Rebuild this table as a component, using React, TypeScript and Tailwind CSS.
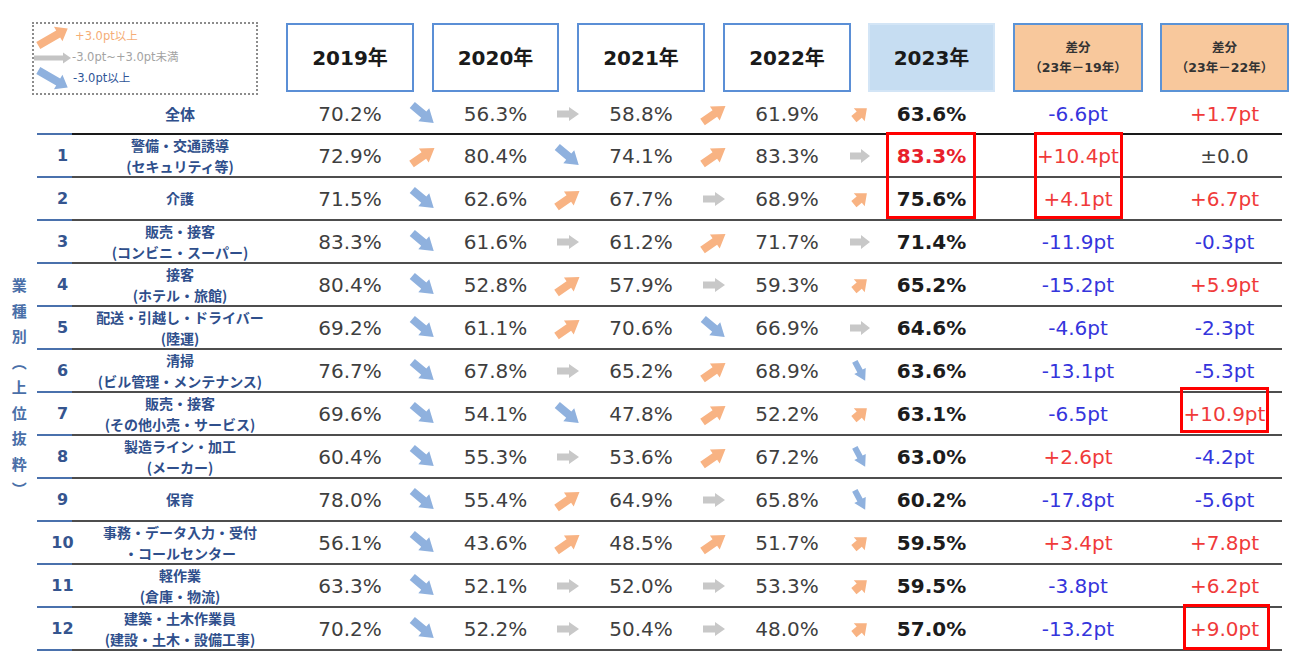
import React from 'react';

type Dir = 'u' | 'r' | 'd';

interface RowData {
  rank?: number;
  label: string[];
  values: string[];
  arrows: Dir[];
  diff1: string;
  diff2: string;
  hot?: boolean;
}

const HEAD_GRID =
  'grid grid-cols-[286px_128px_18px_127px_18px_128px_18px_128px_17px_127px_18px_130px_17px_129px]';
const ROW_GRID =
  'grid grid-cols-[51px_198px_128px_18px_127px_18px_128px_18px_128px_17px_127px_18px_130px_17px_129px]';

const NUM = "[font-family:'DejaVu_Sans','Noto_Sans_CJK_JP',sans-serif]";
const CJK = "[font-family:'Noto_Sans_CJK_JP',sans-serif]";

const total: RowData = {
  label: ['全体'],
  values: ['70.2%', '56.3%', '58.8%', '61.9%', '63.6%'],
  arrows: ['d', 'r', 'u', 'u'],
  diff1: '-6.6pt',
  diff2: '+1.7pt',
};

const rows: RowData[] = [
  { rank: 1, label: ['警備・交通誘導', '(セキュリティ等)'], values: ['72.9%', '80.4%', '74.1%', '83.3%', '83.3%'], arrows: ['u', 'd', 'u', 'r'], diff1: '+10.4pt', diff2: '±0.0', hot: true },
  { rank: 2, label: ['介護'], values: ['71.5%', '62.6%', '67.7%', '68.9%', '75.6%'], arrows: ['d', 'u', 'r', 'u'], diff1: '+4.1pt', diff2: '+6.7pt' },
  { rank: 3, label: ['販売・接客', '(コンビニ・スーパー)'], values: ['83.3%', '61.6%', '61.2%', '71.7%', '71.4%'], arrows: ['d', 'r', 'u', 'r'], diff1: '-11.9pt', diff2: '-0.3pt' },
  { rank: 4, label: ['接客', '(ホテル・旅館)'], values: ['80.4%', '52.8%', '57.9%', '59.3%', '65.2%'], arrows: ['d', 'u', 'r', 'u'], diff1: '-15.2pt', diff2: '+5.9pt' },
  { rank: 5, label: ['配送・引越し・ドライバー', '(陸運)'], values: ['69.2%', '61.1%', '70.6%', '66.9%', '64.6%'], arrows: ['d', 'u', 'd', 'r'], diff1: '-4.6pt', diff2: '-2.3pt' },
  { rank: 6, label: ['清掃', '(ビル管理・メンテナンス)'], values: ['76.7%', '67.8%', '65.2%', '68.9%', '63.6%'], arrows: ['d', 'r', 'u', 'd'], diff1: '-13.1pt', diff2: '-5.3pt' },
  { rank: 7, label: ['販売・接客', '(その他小売・サービス)'], values: ['69.6%', '54.1%', '47.8%', '52.2%', '63.1%'], arrows: ['d', 'd', 'u', 'u'], diff1: '-6.5pt', diff2: '+10.9pt' },
  { rank: 8, label: ['製造ライン・加工', '(メーカー)'], values: ['60.4%', '55.3%', '53.6%', '67.2%', '63.0%'], arrows: ['d', 'r', 'u', 'd'], diff1: '+2.6pt', diff2: '-4.2pt' },
  { rank: 9, label: ['保育'], values: ['78.0%', '55.4%', '64.9%', '65.8%', '60.2%'], arrows: ['d', 'u', 'r', 'd'], diff1: '-17.8pt', diff2: '-5.6pt' },
  { rank: 10, label: ['事務・データ入力・受付', '・コールセンター'], values: ['56.1%', '43.6%', '48.5%', '51.7%', '59.5%'], arrows: ['d', 'u', 'u', 'u'], diff1: '+3.4pt', diff2: '+7.8pt' },
  { rank: 11, label: ['軽作業', '(倉庫・物流)'], values: ['63.3%', '52.1%', '52.0%', '53.3%', '59.5%'], arrows: ['d', 'r', 'r', 'u'], diff1: '-3.8pt', diff2: '+6.2pt' },
  { rank: 12, label: ['建築・土木作業員', '(建設・土木・設備工事)'], values: ['70.2%', '52.2%', '50.4%', '48.0%', '57.0%'], arrows: ['d', 'r', 'r', 'u'], diff1: '-13.2pt', diff2: '+9.0pt' },
];

const arrowColor = (dir: Dir) => (dir === 'u' ? '#f8b383' : dir === 'r' ? '#c8c8c8' : '#8fb1de');

// block arrow, drawn pointing right then rotated
const Arrow = ({ dir, small }: { dir: Dir; small?: boolean }) => {
  if (small) {
    const rot = dir === 'u' ? -40 : dir === 'd' ? 62 : 0;
    const d =
      dir === 'r'
        ? 'M-10 -3.5 H1 V-7 L10 0 L1 7 V3.5 H-10 Z'
        : dir === 'd'
          ? 'M-11 -3 H0 V-6.5 L11 0 L0 6.5 V3 H-11 Z'
          : 'M-8 -4 H-1 V-8.5 L9 0 L-1 8.5 V4 H-8 Z';
    return (
      <svg width="22" height="22" viewBox="-11 -11 22 22" className="overflow-visible">
        <path d={d} fill={arrowColor(dir)} transform={`rotate(${rot})`} />
      </svg>
    );
  }
  const rot = dir === 'u' ? -35 : dir === 'd' ? 40 : 0;
  const d =
    dir === 'r' ? 'M-11 -3.5 H1 V-7 L11 0 L1 7 V3.5 H-11 Z' : 'M-14 -4 H1 V-8.5 L14 0 L1 8.5 V4 H-14 Z';
  return (
    <svg width="30" height="30" viewBox="-15 -15 30 30" className="overflow-visible">
      <path d={d} fill={arrowColor(dir)} transform={`rotate(${rot})`} />
    </svg>
  );
};

const diffColor = (v: string) =>
  v.startsWith('+') ? 'text-[#f03a3a]' : v.startsWith('-') ? 'text-[#3535dc]' : 'text-[#404040]';

const Line = ({ first }: { first?: boolean }) => (
  <div className="flex h-[2px] mr-[7px]">
    <div className="w-[35px] bg-[#4a71ad]" />
    <div className={first ? 'flex-1 bg-[#1a1a1a]' : 'flex-1 bg-[#4d4d4d]'} />
  </div>
);

const DataRow = ({ row, isTotal }: { row: RowData; isTotal?: boolean }) => (
  <div>
    <div className={`${ROW_GRID} ${isTotal ? 'h-[38px]' : 'h-[41px]'} items-center`}>
      <div className={`text-center text-[16px] font-bold text-[#35558f] ${NUM}`}>{row.rank}</div>
      <div className={`pr-[14px] text-center font-bold text-[#2f4f8c] whitespace-nowrap ${CJK} ${isTotal ? 'text-[15px]' : 'text-[14px] leading-[21px]'}`}>
        {row.label.map((l, i) => (
          <div key={i}>{l}</div>
        ))}
      </div>
      {row.values.map((v, i) => (
        <React.Fragment key={i}>
          <div
            className={`text-center text-[20px] ${NUM} ${
              i === 4 ? (row.hot ? 'font-bold text-[#e8212b]' : 'font-bold text-[#1c1c1c]') : 'text-[#3f3f3f]'
            }`}
          >
            {v}
          </div>
          {i < 4 && (
            <div className="flex items-center justify-center overflow-visible">
              <Arrow dir={row.arrows[i]} small={i === 3} />
            </div>
          )}
        </React.Fragment>
      ))}
      <div />
      <div className={`text-center text-[20px] ${NUM} ${diffColor(row.diff1)}`}>{row.diff1}</div>
      <div />
      <div className={`text-center text-[20px] ${NUM} ${diffColor(row.diff2)}`}>{row.diff2}</div>
    </div>
    <Line first={isTotal} />
  </div>
);

const YearBox = ({ year, filled }: { year: string; filled?: boolean }) => (
  <div
    className={`mt-[1px] flex h-[69px] items-center justify-center border-2 text-[20px] font-bold text-[#1a1a1a] ${NUM} ${
      filled ? 'border-[#d3e5f6] bg-[#c6ddf2]' : 'border-[#5b8fd6] bg-white'
    }`}
  >
    {year}
  </div>
);

const DiffBox = ({ range }: { range: string }) => (
  <div className={`mt-[1px] flex h-[69px] flex-col items-center justify-center border-2 border-[#5b93d6] bg-[#f8c89c] text-[12.5px] font-bold leading-[20px] text-[#333] ${NUM}`}>
    <div>差分</div>
    <div>{range}</div>
  </div>
);

const Legend = () => (
  <div className={`ml-[32px] h-[73px] w-[226px] border-2 border-dotted border-[#8c8c8c] pt-[2px] text-[11.5px] ${NUM}`}>
    <div className="flex h-[21px] items-center">
      <svg width="38" height="22" viewBox="0 0 38 22" className="overflow-visible">
        <path d="M2 7 H25 V2.5 L36 11 L25 19.5 V15 H2 Z" fill="#f8b383" transform="rotate(-30 19 11)" />
      </svg>
      <span className="ml-[3px] text-[#f5ad77]">+3.0pt以上</span>
    </div>
    <div className="flex h-[21px] items-center">
      <svg width="38" height="22" viewBox="0 0 38 22">
        <path d="M0 8.5 H29 V5.5 L37 11 L29 16.5 V13.5 H0 Z" fill="#c4c4c4" />
      </svg>
      <span className="text-[#a3a3a3]">-3.0pt~+3.0pt未満</span>
    </div>
    <div className="flex h-[21px] items-center">
      <svg width="38" height="22" viewBox="0 0 38 22" className="overflow-visible">
        <path d="M2 7 H25 V2.5 L36 11 L25 19.5 V15 H2 Z" fill="#8fb1de" transform="rotate(30 19 11)" />
      </svg>
      <span className="ml-[1px] text-[#2f5597]">-3.0pt以上</span>
    </div>
  </div>
);

export default function App() {
  return (
    <div className="relative h-[655px] w-[1289px] overflow-hidden bg-white">
      {/* header */}
      <div className={`${HEAD_GRID} h-[95px] items-start pt-[22px]`}>
        <Legend />
        <YearBox year="2019年" />
        <div />
        <YearBox year="2020年" />
        <div />
        <YearBox year="2021年" />
        <div />
        <YearBox year="2022年" />
        <div />
        <YearBox year="2023年" filled />
        <div />
        <DiffBox range="（23年－19年）" />
        <div />
        <DiffBox range="（23年－22年）" />
      </div>

      <div className="flex">
        <div className="flex w-[37px] flex-col">
          <div className="h-[40px]" />
          <div className="flex flex-1 items-center justify-center">
            <div className={`[writing-mode:vertical-rl] text-[15px] font-bold tracking-[10.5px] text-[#4a6fa8] ${CJK}`}>
              業種別（上位抜粋）
            </div>
          </div>
        </div>
        <div className="flex-1">
          <DataRow row={total} isTotal />
          {rows.map((r) => (
            <DataRow key={r.rank} row={r} />
          ))}
        </div>
      </div>

      {/* highlight frames */}
      <div className="absolute left-[886px] top-[132px] h-[87px] w-[90px] border-[3px] border-[#ff0000]" />
      <div className="absolute left-[1034px] top-[132px] h-[87px] w-[89px] border-[3px] border-[#ff0000]" />
      <div className="absolute left-[1180px] top-[387px] h-[46px] w-[89px] border-[3px] border-[#ff0000]" />
      <div className="absolute left-[1183px] top-[604px] h-[46px] w-[87px] border-[3px] border-[#ff0000]" />
    </div>
  );
}
